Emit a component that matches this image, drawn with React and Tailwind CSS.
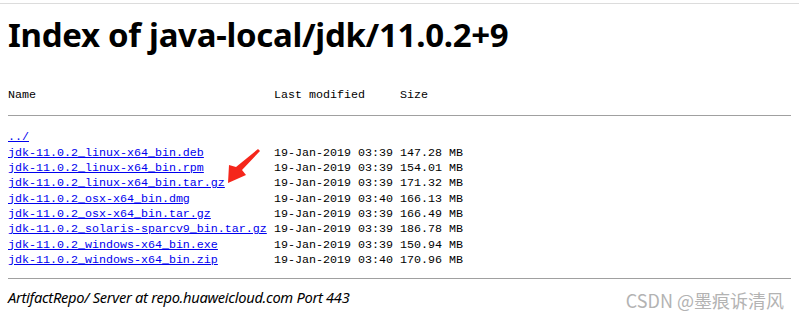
export default function App() {
  const rows = [
    ["jdk-11.0.2_linux-x64_bin.deb", "19-Jan-2019 03:39", "147.28 MB"],
    ["jdk-11.0.2_linux-x64_bin.rpm", "19-Jan-2019 03:39", "154.01 MB"],
    ["jdk-11.0.2_linux-x64_bin.tar.gz", "19-Jan-2019 03:39", "171.32 MB"],
    ["jdk-11.0.2_osx-x64_bin.dmg", "19-Jan-2019 03:40", "166.13 MB"],
    ["jdk-11.0.2_osx-x64_bin.tar.gz", "19-Jan-2019 03:39", "166.49 MB"],
    ["jdk-11.0.2_solaris-sparcv9_bin.tar.gz", "19-Jan-2019 03:39", "186.78 MB"],
    ["jdk-11.0.2_windows-x64_bin.exe", "19-Jan-2019 03:39", "150.94 MB"],
    ["jdk-11.0.2_windows-x64_bin.zip", "19-Jan-2019 03:40", "170.96 MB"],
  ];
  const mono = "font-['Liberation_Mono',monospace] text-[11.67px] leading-[15.33px] whitespace-pre";
  return (
    <div className="relative w-[799px] h-[317px] bg-white overflow-hidden text-black">
      <div className="h-[3px]" />
      <div className="border-t border-[#dcdcdc]" />
      <div className="px-2">
        <h1 className="font-['Noto_Sans',sans-serif] font-bold text-[33px] leading-[40px] mt-[11px] tracking-[-0.3px]">
          Index of java-local/jdk/11.0.2+9
        </h1>
        <div className={`${mono} mt-[33px]`}>
          <span className="inline-block w-[266px]">Name</span>
          <span className="inline-block w-[126px]">Last modified</span>
          <span>Size</span>
        </div>
        <div className="border-t border-[#a0a0a0] mt-[12px]" />
        <div className={`${mono} mt-[14px]`}>
          <div>
            <a href="#" className="text-[#0000ee] underline">../</a>
          </div>
          {rows.map(([n, d, s]) => (
            <div key={n} className="flex">
              <span className="inline-block w-[266px]">
                <a href="#" className="text-[#0000ee] underline">{n}</a>
              </span>
              <span>{d} {s}</span>
            </div>
          ))}
        </div>
        <div className="border-t border-[#a0a0a0] mt-[10px]" />
        <div className="font-['Noto_Sans',sans-serif] italic text-[14.7px] leading-[20px] mt-[8px] tracking-[-0.3px]">
          ArtifactRepo/ Server at repo.huaweicloud.com Port 443
        </div>
      </div>
      <svg className="absolute left-0 top-0" width="799" height="317" viewBox="0 0 799 317">
        <polygon
          points="258,149 260,151 242,170 246,175 228,183 229,165 236,167"
          fill="#f5261b"
        />
      </svg>
      <div className="absolute right-[15px] top-[288px] font-['Noto_Sans_CJK_SC',sans-serif] text-[18px] leading-[24px] text-[#b3b3b3]">
        CSDN @墨痕诉清风
      </div>
    </div>
  );
}
